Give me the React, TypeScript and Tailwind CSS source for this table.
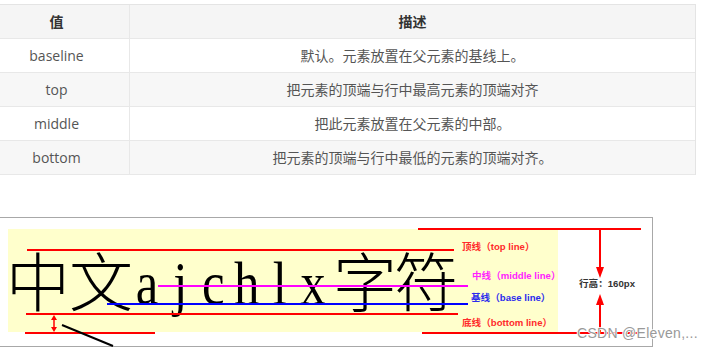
import React from "react";

const rows = [
  ["baseline", "默认。元素放置在父元素的基线上。"],
  ["top", "把元素的顶端与行中最高元素的顶端对齐"],
  ["middle", "把此元素放置在父元素的中部。"],
  ["bottom", "把元素的顶端与行中最低的元素的顶端对齐。"],
];

const latin = ["a", "j", "c", "h", "l", "x"];

function Diagram() {
  const cjk = "'Noto Sans CJK SC', sans-serif";
  const lab = "'Liberation Sans', 'Noto Sans CJK SC', sans-serif";
  return (
    <svg width={705} height={174} viewBox="0 175 705 174" className="block">
      <rect x={-1} y={217.5} width={653.5} height={129} fill="#fff" stroke="#a8a8a8" strokeWidth={1} />
      <rect x={8} y={229} width={550} height={103} fill="#ffffcc" />
      {/* big text */}
      <g fill="#000">
        <text x={38} y={306} fontSize={64} fontFamily={cjk} textAnchor="middle" fontWeight={300}>中</text>
        <text x={101} y={306} fontSize={64} fontFamily={cjk} textAnchor="middle" fontWeight={300}>文</text>
        {latin.map((c, i) => (
          <text
            key={c}
            transform={`translate(${147 + i * 33.2} 304) scale(0.82 1)`}
            x={0}
            y={0}
            fontSize={62}
            fontFamily="'Liberation Serif', serif"
            textAnchor="middle"
          >
            {c}
          </text>
        ))}
        <text x={365} y={306} fontSize={64} fontFamily={cjk} textAnchor="middle" fontWeight={300}>字</text>
        <text x={426} y={306} fontSize={64} fontFamily={cjk} textAnchor="middle" fontWeight={300}>符</text>
      </g>
      {/* lines */}
      <g strokeWidth={2}>
        <line x1={27} y1={250} x2={454} y2={250} stroke="#ff0000" />
        <line x1={158} y1={286} x2={468} y2={286} stroke="#ff00ff" />
        <line x1={107} y1={304} x2={468} y2={304} stroke="#0000ff" />
        <line x1={26} y1={314} x2={458} y2={314} stroke="#ff0000" />
        <line x1={25} y1={333} x2={155} y2={333} stroke="#ff0000" />
        <line x1={418} y1={229} x2={641} y2={229} stroke="#ff0000" />
        <line x1={422} y1={333} x2={641} y2={333} stroke="#ff0000" />
        <line x1={600} y1={229} x2={600} y2={270} stroke="#ff0000" />
        <line x1={600} y1={302} x2={600} y2={333} stroke="#ff0000" />
        <line x1={54} y1={318} x2={54} y2={329} stroke="#ff0000" strokeWidth={1.5} />
        <line x1={62} y1={325} x2={113} y2={346} stroke="#000" />
      </g>
      <polygon points="596,267 604,267 600,278" fill="#ff0000" />
      <polygon points="600,294 596,305 604,305" fill="#ff0000" />
      <polygon points="51,320 57,320 54,315" fill="#ff0000" />
      <polygon points="51,327 57,327 54,332" fill="#ff0000" />
      {/* labels */}
      <g fontSize={9.6} fontWeight={700} fontFamily={lab}>
        <text x={462} y={250} fill="#ff2a2a">顶线（top line）</text>
        <text x={472} y={278.5} fill="#ff22ff">中线（middle line）</text>
        <text x={471} y={301} fill="#2a2aee">基线（base line）</text>
        <text x={462} y={326} fill="#ff2a2a">底线（bottom line）</text>
        <text x={579} y={286.5} fill="#333">行高：160px</text>
      </g>
      <text
        x={577}
        y={338}
        fontSize={14}
        fontFamily="'Liberation Sans', sans-serif"
        fill="#999999"
        stroke="#ffffff"
        strokeWidth={1.5}
        paintOrder="stroke"
        letterSpacing={0.3}
      >
        CSDN @Eleven,...
      </text>
    </svg>
  );
}

export default function App() {
  return (
    <div className="w-[705px] h-[349px] overflow-hidden bg-white">
      <div className="pt-[4px]">
        <div
          className="ml-[-17px] w-[713px] border border-b-0 border-[#e4e4e4] text-[14px] text-[#555]"
          style={{ fontFamily: "'Open Sans', 'Noto Sans CJK SC', sans-serif" }}
        >
          <div className="grid grid-cols-[146px_1fr] h-[34px] border-b border-[#e8e8e8] bg-[#f5f5f5] font-bold text-[#333]">
            <div className="flex items-center justify-center border-r border-[#e8e8e8]">值</div>
            <div className="flex items-center justify-center">描述</div>
          </div>
          {rows.map(([a, b], i) => (
            <div
              key={a}
              className={
                "grid grid-cols-[146px_1fr] h-[34px] border-b border-[#e8e8e8] " +
                (i % 2 === 1 ? "bg-[#f7f7f7]" : "bg-white")
              }
            >
              <div className="flex items-center justify-center border-r border-[#e8e8e8]">{a}</div>
              <div className="flex items-center justify-center">{b}</div>
            </div>
          ))}
        </div>
      </div>
      <Diagram />
    </div>
  );
}
